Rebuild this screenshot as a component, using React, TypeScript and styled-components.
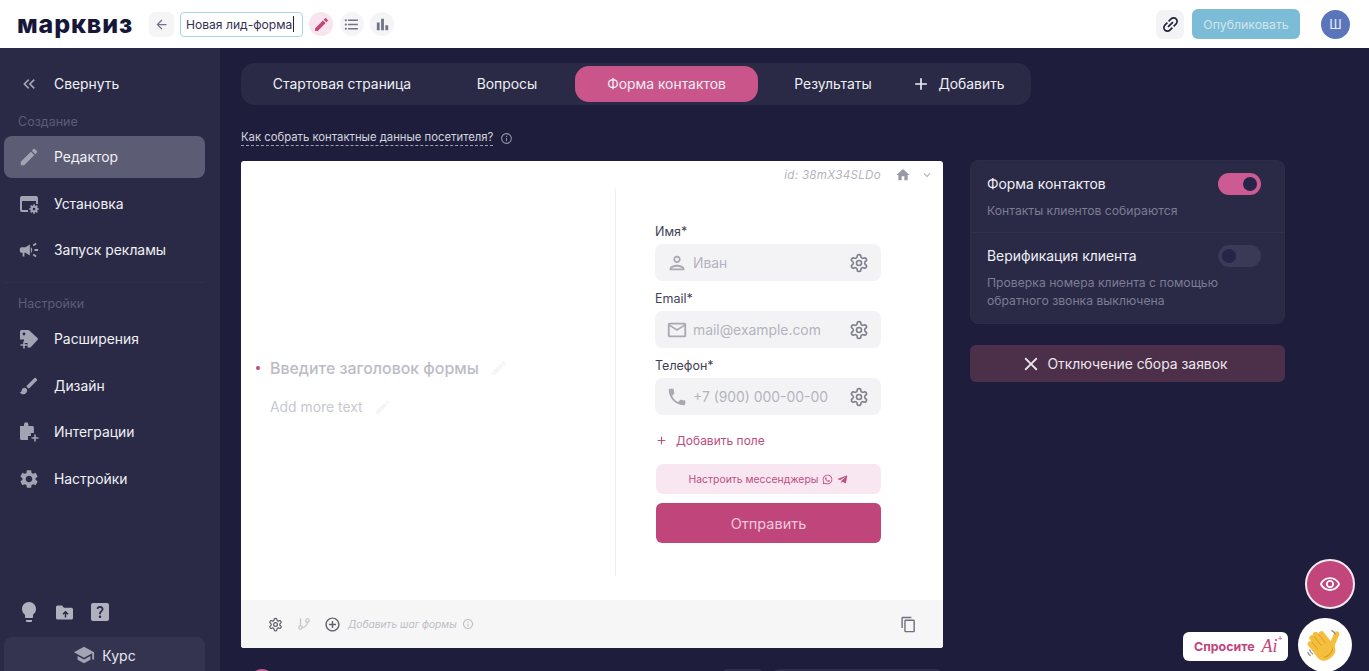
import React from "react";
import styled, { createGlobalStyle } from "styled-components";
import {
  MdArrowBack, MdEdit, MdFormatListBulleted, MdBarChart, MdKeyboardDoubleArrowLeft, MdCampaign,
  MdBrush, MdSettings, MdLightbulb, MdHelpCenter, MdSchool, MdOutlineRemoveRedEye, MdOutlinePerson,
  MdOutlineMailOutline, MdPhone, MdHome, MdKeyboardArrowDown, MdAddCircleOutline,
  MdInfoOutline, MdContentCopy, MdAdd, MdClose, MdLink,
} from "react-icons/md";
import { FaWhatsapp, FaTelegramPlane } from "react-icons/fa";
import { LuSettings, LuGitBranch } from "react-icons/lu";

const Global = createGlobalStyle`
  html, body { margin: 0; padding: 0; height: 100%; overflow: hidden; background: #1e1e3c; }
  body { font-family: Inter, "Noto Sans", "Liberation Sans", sans-serif; }
  * { box-sizing: border-box; }
`;

const Page = styled.div`
  width: 1369px; height: 671px; display: flex; flex-direction: column; overflow: hidden; position: relative;
`;
const Header = styled.header`
  height: 48px; flex: none; background: #fff; display: flex; align-items: center; padding: 0 19px 0 17px;
`;
const Logo = styled.div`
  width: 132px; flex: none; font-size: 25px; font-weight: 800; color: #17173a; letter-spacing: 0.85px; line-height: 44px;
`;
const BackBtn = styled.button`
  width: 25px; height: 25px; border: 0; border-radius: 6px; background: #f5f5f7; color: #73738a; display: flex; align-items: center; justify-content: center; padding: 0; margin-right: 6px; font-size: 15px;
`;
const TitleInput = styled.div`
  width: 123px; height: 25px; border: 1px solid #a8d5e5; border-radius: 4px; font-size: 12.1px; color: #33334f; display: flex; align-items: center; padding-left: 5px; margin-right: 6px; white-space: nowrap;
`;
const Caret = styled.span`
  display: inline-block; width: 1px; height: 16px; background: #22223c; margin-left: 1px;
`;
const RoundBtn = styled.div<{ $active?: boolean }>`
  width: 24px; height: 24px; border-radius: 50%; background: ${p => p.$active ? "#f8e4ee" : "#f5f5f7"}; color: ${p => p.$active ? "#c2457b" : "#73738a"}; display: flex; align-items: center; justify-content: center; font-size: 17px; margin-right: 6.5px;
`;
const Spacer = styled.div`flex: 1;`;
const LinkBtn = styled.div`
  width: 28px; height: 29px; border-radius: 7px; background: #f3f3f6; color: #22223c; display: flex; align-items: center; justify-content: center; font-size: 21px; margin-right: 8px;
  svg { transform: rotate(-45deg); }
`;
const Publish = styled.div`
  width: 108px; height: 30px; border-radius: 6px; background: #7dbcd6; color: #cfe6ef; font-size: 12.3px; display: flex; align-items: center; justify-content: center; margin-right: 21px;
`;
const Avatar = styled.div`
  width: 29px; height: 29px; border-radius: 50%; background: #5b75bb; color: #e7ecf8; font-size: 13px; display: flex; align-items: center; justify-content: center;
`;
const Body = styled.div`flex: 1; display: flex; min-height: 0;`;
const Sidebar = styled.aside`
  width: 220px; flex: none; background: #2a2a46; padding: 15px 15px 0 4px; display: flex; flex-direction: column; color: #f0f0f5;
`;
const NavItem = styled.div<{ $active?: boolean }>`
  height: 42px; flex: none; border-radius: 8px; display: flex; align-items: center; padding-left: 14px; font-size: 13.9px;
  background: ${p => p.$active ? "#5c5d74" : "transparent"}; color: #f0f0f5; margin-bottom: 4.7px;
`;
const NavIcon = styled.span`
  width: 22px; height: 22px; margin-right: 14px; display: flex; align-items: center; justify-content: center; color: #a3a3b4; font-size: 22px;
`;
const SmallNavIcon = styled(NavIcon)`font-size: 20px;`;
const SectionLabel = styled.div<{ $top: number }>`
  font-size: 12.5px; color: #5d5d78; padding-left: 14px; height: 16px; line-height: 16px; margin-top: ${p => p.$top}px; margin-bottom: 6px;
`;
const NavDivider = styled.div`height: 1px; background: #2f2f4c; margin: 6px 0 10px;`;
const SideTools = styled.div`
  margin-top: auto; display: flex; align-items: center; padding-left: 13px; gap: 13px; color: #b0b0be; font-size: 24px; height: 24px; margin-bottom: 13px;
`;
const Course = styled.div`
  height: 36px; flex: none; border-radius: 8px 8px 0 0; background: #343450; display: flex; align-items: center; justify-content: center; gap: 7px; font-size: 14px; color: #e8e8ef; margin-bottom: -2px;
  svg { color: #a3a3b4; font-size: 22px; }
`;
const Main = styled.main`flex: 1; padding: 15px 84px 0 21px; min-width: 0;`;
const Tabs = styled.nav`
  width: 790px; height: 42px; border-radius: 14px; background: #2a2a46; display: flex; align-items: center; padding-left: 1px; color: #eeeef3; font-size: 13.9px;
`;
const Tab = styled.div<{ $w: number; $active?: boolean }>`
  width: ${p => p.$w}px; height: 36px; border-radius: 14px; display: flex; align-items: center; justify-content: center; white-space: nowrap; gap: 7px;
  background: ${p => p.$active ? "#c9558b" : "transparent"};
  margin-left: ${p => p.$active ? 3 : 0}px;
  svg { font-size: 20px; }
`;
const HelpRow = styled.div`
  margin-top: 24px; height: 18px; display: flex; align-items: center; color: #d5d5df; font-size: 11.3px; gap: 7px;
  span { border-bottom: 1px dashed #a0a0b0; line-height: 15px; }
  svg { color: #8a8aa0; font-size: 13px; }
`;
const Workspace = styled.div`margin-top: 14px; display: flex; align-items: flex-start; gap: 27px;`;
const Card = styled.section`
  width: 702px; height: 487px; flex: none; background: #fff; border-radius: 3px; display: flex; flex-direction: column; overflow: hidden; position: relative;
`;
const CardTop = styled.div`
  height: 27px; flex: none; display: flex; align-items: center; justify-content: flex-end; padding-right: 9px; color: #b5b5bd; font-style: italic; font-size: 11.6px;
`;
const CardMeta = styled.span`margin-right: 14px; letter-spacing: 0.3px;`;
const HomeIcon = styled(MdHome)`font-size: 16px; color: #9a9aa6; margin-right: 9px;`;
const ChevronIcon = styled(MdKeyboardArrowDown)`font-size: 14px; color: #b0b0ba;`;
const CardBody = styled.div`flex: 1; display: flex; padding-bottom: 24px; min-height: 0;`;
const LeftPane = styled.div`
  width: 375px; flex: none; border-right: 1px solid #efeff1; display: flex; flex-direction: column; justify-content: center; padding: 11px 0 0 15px;
`;
const Heading = styled.div`
  display: flex; align-items: center; color: #bcbcc6; font-size: 15.9px; font-weight: 500; height: 26px; gap: 11px;
  &::before { content: ""; width: 4px; height: 4px; border-radius: 50%; background: #c2457b; margin-right: -1px; }
`;
const SubHeading = styled.div`
  display: flex; align-items: center; margin-top: 13px; padding-left: 14px; color: #c8c8d0; font-size: 13.9px; height: 26px; gap: 11px;
`;
const FaintPen = styled(MdEdit)`color: #f5f5f6; font-size: 18px;`;
const RightPane = styled.div`padding: 35px 0 0 39px; width: 266px; flex: none;`;
const FieldLabel = styled.div`font-size: 12.5px; color: #3f3f55; height: 17px; line-height: 17px; margin-bottom: 4px;`;
const Field = styled.div`
  width: 226px; height: 37px; border-radius: 8px; background: #f3f3f5; display: flex; align-items: center; padding: 0 12px 0 11px; color: #b4b4be; font-size: 13.9px; margin-bottom: 9px;
`;
const FieldIcon = styled.span`
  width: 22px; margin-right: 5px; display: flex; justify-content: center; color: #a9a9b4; font-size: 22px;
`;
const GearIcon = styled(LuSettings)`margin-left: auto; font-size: 20px; color: #80808e;`;
const AddField = styled.div`
  display: flex; align-items: center; margin-top: 16px; color: #bb4d80; font-size: 12px; height: 18px; gap: 8px;
  svg { font-size: 13px; }
`;
const Messengers = styled.div`
  margin-top: 15px; margin-left: 1px; width: 225px; height: 30px; border-radius: 7px; background: #f8e6f1; color: #bd4f83; font-size: 10.4px; display: flex; align-items: center; justify-content: center; gap: 4px;
  svg { font-size: 11px; }
`;
const Send = styled.div`
  margin-top: 9px; margin-left: 1px; width: 225px; height: 40px; border-radius: 6px; background: #c0457b; color: #ecc9da; font-size: 14.5px; display: flex; align-items: center; justify-content: center;
`;
const CardFooter = styled.div`
  height: 48px; flex: none; background: #f6f6f7; display: flex; align-items: center; padding: 0 26px 0 27px; color: #5c5c6e;
`;
const FooterGear = styled(LuSettings)`font-size: 15px; color: #60606f; margin-right: 14px;`;
const FooterBranch = styled(LuGitBranch)`font-size: 14px; color: #c0c0c8; margin-right: 13px;`;
const FooterAdd = styled(MdAddCircleOutline)`font-size: 17px; color: #60606f; margin-right: 7px;`;
const FooterText = styled.span`font-size: 10.2px; font-style: italic; color: #bdbdc5;`;
const FooterInfo = styled(MdInfoOutline)`font-size: 12px; color: #bdbdc5; margin-left: 5px;`;
const FooterCopy = styled(MdContentCopy)`font-size: 17px; color: #70707f; margin-left: auto;`;
const Side = styled.aside`width: 315px; flex: none; margin-top: -1px;`;
const Panel = styled.div`
  border-radius: 8px; background: #2a2a46; color: #f0f0f5; border: 1px solid #2d2d49;
`;
const PanelRow = styled.div<{ $h: number }>`
  height: ${p => p.$h}px; padding: 13px 23px 0 16px; position: relative;
  & + & { border-top: 1px solid #30304d; }
`;
const PanelTitle = styled.div`font-size: 13.9px; line-height: 20px; height: 20px; display: flex; align-items: center; justify-content: space-between;`;
const PanelText = styled.div`font-size: 12.2px; line-height: 18px; color: #7c7c94; margin-top: 8px; width: 250px;`;
const Toggle = styled.div<{ $on?: boolean }>`
  width: 43px; height: 22px; border-radius: 11px; background: ${p => p.$on ? "#cc5b93" : "#3a3a56"}; display: flex; align-items: center; padding: 0 3px;
  justify-content: ${p => p.$on ? "flex-end" : "flex-start"};
  &::after { content: ""; width: 14px; height: 14px; border-radius: 50%; background: #25254a; margin: 0 1px; }
`;
const Disable = styled.div`
  margin-top: 21px; height: 37px; border-radius: 6px; background: #4c2f49; color: #ece7ec; font-size: 13.9px; display: flex; align-items: center; justify-content: center; gap: 5px; padding-right: 7px;
  svg { font-size: 22px; }
`;
const Below = styled.div`display: flex; align-items: center; margin-top: 21px; height: 24px;`;
const BelowDot = styled.div`width: 24px; height: 24px; border-radius: 50%; background: #cc5b93; margin-right: 449px; margin-left: 9px;`;
const BelowPill = styled.div<{ $w: number }>`width: ${p => p.$w}px; height: 24px; border-radius: 5px; background: #2f2f4c; margin-right: 11px;`;
const EyeFab = styled.div`
  position: absolute; left: 1305px; top: 559px; width: 50px; height: 50px; border-radius: 50%; background: #c2457b; border: 2px solid #f3eaf0; display: flex; align-items: center; justify-content: center; color: #fff; font-size: 22px;
`;
const Ask = styled.div`
  position: absolute; left: 1183px; top: 632px; width: 105px; height: 29px; border-radius: 6px; background: #fff; color: #c2457b; font-size: 12.4px; font-weight: 700; display: flex; align-items: center; padding-left: 11px; gap: 7px;
  em { font-family: "Liberation Serif", serif; font-size: 18px; font-weight: 400; position: relative; }
  em::after { content: "+"; position: absolute; right: -5px; top: -3px; font-size: 9px; font-style: normal; font-weight: 700; }
`;
const WaveFab = styled.div`
  position: absolute; left: 1298px; top: 618px; width: 54px; height: 54px; border-radius: 50%; background: #fff; display: flex; align-items: center; justify-content: center; padding: 0 2px 3px 0;
`;

const WindowGear = () => (
  <svg width="22" height="22" viewBox="0 0 22 22" fill="none">
    <path d="M4 3h14a2 2 0 0 1 2 2v6h-2V8H4v9h6v2H4a2 2 0 0 1-2-2V5a2 2 0 0 1 2-2z" fill="currentColor" />
    <circle cx="16" cy="16" r="3.6" fill="currentColor" />
    <circle cx="16" cy="16" r="1.3" fill="#2a2a46" />
    <path d="M16 11.200v2M16 18.800v2M11.200 16h2M18.800 16h2M12.600 12.600l1.400 1.400M18 18l1.400 1.400M12.600 19.400l1.400-1.400M18 14l1.400-1.400" stroke="currentColor" strokeWidth="1.600" />
  </svg>
);
const TagPlus = () => (
  <svg width="22" height="22" viewBox="0 0 22 22">
    <path d="M2 3.500A1.500 1.500 0 0 1 3.500 2H10c.5 0 1 .2 1.300.6l8.200 7.400c.6.6.6 1.500 0 2.100l-7 7.400H9.500V15H6v-3.500H2z" fill="currentColor" />
    <path d="M6 13.500v7M2.500 17h7" stroke="currentColor" strokeWidth="1.600" />
    <circle cx="6" cy="6" r="1.400" fill="#2a2a46" />
  </svg>
);
const PuzzlePlus = () => (
  <svg width="22" height="22" viewBox="0 0 22 22">
    <path d="M2 5h4V3.500a2.200 2.200 0 0 1 4.400 0V5h4a1.500 1.500 0 0 1 1.500 1.500V12h-3v3H10v4H3.500A1.500 1.500 0 0 1 2 17.500z" fill="currentColor" />
    <path d="M17 13.500v7M13.500 17h7" stroke="currentColor" strokeWidth="1.600" />
  </svg>
);
const FolderUp = () => (
  <svg width="21" height="21" viewBox="0 0 21 21">
    <path d="M2 5a1.500 1.500 0 0 1 1.500-1.500H8l2 2.300h7.500A1.500 1.500 0 0 1 19 7.300V16a1.500 1.500 0 0 1-1.500 1.500h-14A1.500 1.500 0 0 1 2 16z" fill="currentColor" />
    <path d="M11.500 15.500v-5M9 12.300l2.500-2.500 2.500 2.500" stroke="#2a2a46" strokeWidth="1.500" fill="none" />
  </svg>
);
const Hand = () => (
  <svg width="38" height="38" viewBox="0 0 42 42" fill="none">
    <path d="M35 10L29 24" stroke="#f4bf3f" strokeWidth="6" strokeLinecap="round" />
    <g transform="rotate(-38 22 26)">
      <g fill="#f4bf3f">
        <rect x="9.500" y="9" width="6" height="22" rx="3" />
        <rect x="15" y="5" width="6" height="26" rx="3" />
        <rect x="20.500" y="4.500" width="6" height="26" rx="3" />
        <rect x="26" y="8" width="6" height="24" rx="3" />
        <rect x="9.500" y="20" width="22.500" height="18" rx="9" />
      </g>
      <path d="M15.250 11v11M20.750 8v13M26.250 9v13" stroke="#dc9c22" strokeWidth="1" />
    </g>
    <path d="M21 36c4-1 8-5 10-10" stroke="#dc9c22" strokeWidth="1.300" />
    <path d="M29 6c2.300.8 3.700 2.200 4.500 4.500" stroke="#8d8d98" strokeWidth="1.400" />
    <path d="M5 27c.5 2.300 1.700 4 3.800 5.300M3 30c.6 2 1.500 3 3.300 4" stroke="#8d8d98" strokeWidth="1.400" />
  </svg>
);

export default function App() {
  return (
    <Page>
      <Global />
      <Header>
        <Logo>марквиз</Logo>
        <BackBtn aria-label="Назад"><MdArrowBack /></BackBtn>
        <TitleInput>Новая лид-форма<Caret /></TitleInput>
        <RoundBtn $active><MdEdit /></RoundBtn>
        <RoundBtn><MdFormatListBulleted /></RoundBtn>
        <RoundBtn><MdBarChart /></RoundBtn>
        <Spacer />
        <LinkBtn><MdLink /></LinkBtn>
        <Publish>Опубликовать</Publish>
        <Avatar>Ш</Avatar>
      </Header>
      <Body>
        <Sidebar>
          <NavItem><SmallNavIcon><MdKeyboardDoubleArrowLeft /></SmallNavIcon>Свернуть</NavItem>
          <SectionLabel $top={4.3}>Создание</SectionLabel>
          <NavItem $active><NavIcon><MdEdit /></NavIcon>Редактор</NavItem>
          <NavItem><NavIcon><WindowGear /></NavIcon>Установка</NavItem>
          <NavItem><NavIcon><MdCampaign /></NavIcon>Запуск рекламы</NavItem>
          <NavDivider />
          <SectionLabel $top={3}>Настройки</SectionLabel>
          <NavItem><NavIcon><TagPlus /></NavIcon>Расширения</NavItem>
          <NavItem><NavIcon><MdBrush /></NavIcon>Дизайн</NavItem>
          <NavItem><NavIcon><PuzzlePlus /></NavIcon>Интеграции</NavItem>
          <NavItem><NavIcon><MdSettings /></NavIcon>Настройки</NavItem>
          <SideTools><MdLightbulb /><FolderUp /><MdHelpCenter /></SideTools>
          <Course><MdSchool />Курс</Course>
        </Sidebar>
        <Main>
          <Tabs>
            <Tab $w={200}>Стартовая страница</Tab>
            <Tab $w={130}>Вопросы</Tab>
            <Tab $w={183} $active>Форма контактов</Tab>
            <Tab $w={150}>Результаты</Tab>
            <Tab $w={100}><MdAdd />Добавить</Tab>
          </Tabs>
          <HelpRow><span>Как собрать контактные данные посетителя?</span><MdInfoOutline /></HelpRow>
          <Workspace>
            <Card>
              <CardTop><CardMeta>id: 38mX34SLDo</CardMeta><HomeIcon /><ChevronIcon /></CardTop>
              <CardBody>
                <LeftPane>
                  <Heading>Введите заголовок формы<FaintPen /></Heading>
                  <SubHeading>Add more text<FaintPen /></SubHeading>
                </LeftPane>
                <RightPane>
                  <FieldLabel>Имя*</FieldLabel>
                  <Field><FieldIcon><MdOutlinePerson /></FieldIcon>Иван<GearIcon /></Field>
                  <FieldLabel>Email*</FieldLabel>
                  <Field><FieldIcon><MdOutlineMailOutline /></FieldIcon>mail@example.com<GearIcon /></Field>
                  <FieldLabel>Телефон*</FieldLabel>
                  <Field><FieldIcon><MdPhone /></FieldIcon>+7 (900) 000-00-00<GearIcon /></Field>
                  <AddField><MdAdd />Добавить поле</AddField>
                  <Messengers>Настроить мессенджеры <FaWhatsapp /><FaTelegramPlane /></Messengers>
                  <Send>Отправить</Send>
                </RightPane>
              </CardBody>
              <CardFooter>
                <FooterGear /><FooterBranch /><FooterAdd />
                <FooterText>Добавить шаг формы</FooterText><FooterInfo />
                <FooterCopy />
              </CardFooter>
            </Card>
            <Side>
              <Panel>
                <PanelRow $h={71}>
                  <PanelTitle>Форма контактов<Toggle $on /></PanelTitle>
                  <PanelText>Контакты клиентов собираются</PanelText>
                </PanelRow>
                <PanelRow $h={91}>
                  <PanelTitle>Верификация клиента<Toggle /></PanelTitle>
                  <PanelText>Проверка номера клиента с помощью обратного звонка выключена</PanelText>
                </PanelRow>
              </Panel>
              <Disable><MdClose />Отключение сбора заявок</Disable>
            </Side>
          </Workspace>
          <Below>
            <BelowDot />
            <BelowPill $w={40} />
            <BelowPill $w={167} />
          </Below>
        </Main>
      </Body>
      <EyeFab><MdOutlineRemoveRedEye /></EyeFab>
      <Ask>Спросите <em>Ai</em></Ask>
      <WaveFab><Hand /></WaveFab>
    </Page>
  );
}
